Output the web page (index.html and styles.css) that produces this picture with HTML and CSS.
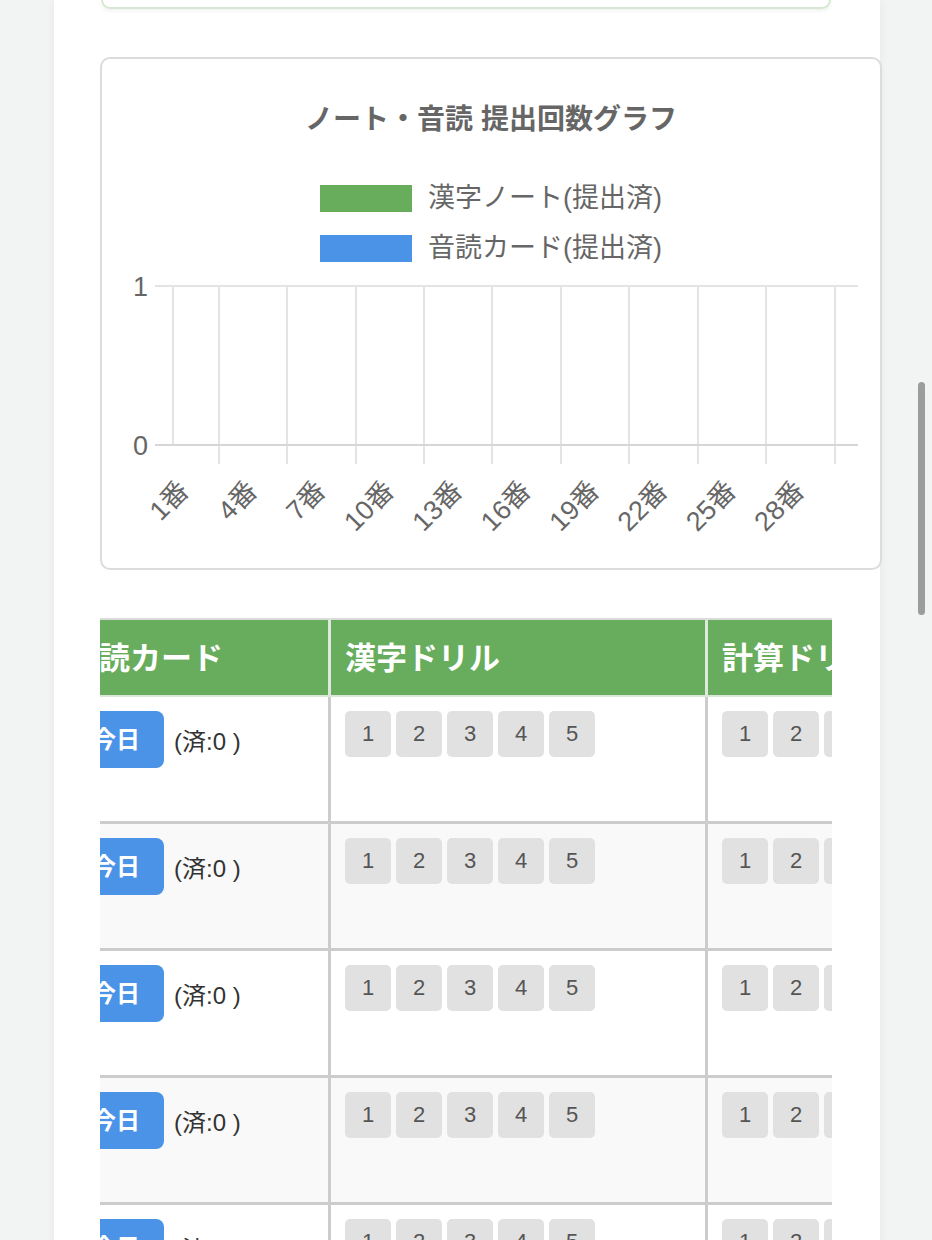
FILE: index.html
```html
<!DOCTYPE html>
<html lang="ja">
<head>
<meta charset="utf-8">
<title>提出状況</title>
<link rel="stylesheet" href="styles.css">
</head>
<body>
<div class="page">
  <div class="top-card"></div>

  <section class="chart-card">
    <h2 class="chart-title">ノート・音読 提出回数グラフ</h2>
    <ul class="legend">
      <li class="legend-item"><span class="swatch swatch-green"></span><span class="legend-label">漢字ノート(提出済)</span></li>
      <li class="legend-item"><span class="swatch swatch-blue"></span><span class="legend-label">音読カード(提出済)</span></li>
    </ul>
    <svg class="plot" width="778" height="303" viewBox="102 265 778 303" xmlns="http://www.w3.org/2000/svg">
      <g stroke="#e4e4e4" stroke-width="2" fill="none">
        <line x1="155" y1="286" x2="858" y2="286"/>
        <line x1="173" y1="286" x2="173" y2="445"/>
        <line x1="219" y1="286" x2="219" y2="464"/>
        <line x1="287" y1="286" x2="287" y2="464"/>
        <line x1="356" y1="286" x2="356" y2="464"/>
        <line x1="424" y1="286" x2="424" y2="464"/>
        <line x1="492" y1="286" x2="492" y2="464"/>
        <line x1="561" y1="286" x2="561" y2="464"/>
        <line x1="629" y1="286" x2="629" y2="464"/>
        <line x1="698" y1="286" x2="698" y2="464"/>
        <line x1="766" y1="286" x2="766" y2="464"/>
        <line x1="835" y1="286" x2="835" y2="464"/>
      </g>
      <line x1="155" y1="445" x2="858" y2="445" stroke="#d6d6d6" stroke-width="2"/>
      <g class="axis-text" text-anchor="end" dominant-baseline="central">
        <text x="148" y="287">1</text>
        <text x="148" y="446">0</text>
      </g>
      <g class="axis-text" text-anchor="end" dominant-baseline="central">
        <text x="184" y="486" transform="rotate(-45 184 486)">1番</text>
        <text x="252.4" y="486" transform="rotate(-45 252.4 486)">4番</text>
        <text x="320.8" y="486" transform="rotate(-45 320.8 486)">7番</text>
        <text x="389.2" y="486" transform="rotate(-45 389.2 486)">10番</text>
        <text x="457.6" y="486" transform="rotate(-45 457.6 486)">13番</text>
        <text x="526" y="486" transform="rotate(-45 526 486)">16番</text>
        <text x="594.4" y="486" transform="rotate(-45 594.4 486)">19番</text>
        <text x="662.8" y="486" transform="rotate(-45 662.8 486)">22番</text>
        <text x="731.2" y="486" transform="rotate(-45 731.2 486)">25番</text>
        <text x="799.6" y="486" transform="rotate(-45 799.6 486)">28番</text>
      </g>
    </svg>
  </section>

  <div class="table-scroll">
    <div class="tbl">
      <div class="th">音読カード</div>
      <div class="th">漢字ドリル</div>
      <div class="th">計算ドリル</div>

      <div class="td"><div class="today-row"><button class="btn-today">今日</button><span class="done">(済:0 )</span></div></div>
      <div class="td"><div class="nums"><span class="num">1</span><span class="num">2</span><span class="num">3</span><span class="num">4</span><span class="num">5</span></div></div>
      <div class="td"><div class="nums"><span class="num">1</span><span class="num">2</span><span class="num">3</span><span class="num">4</span><span class="num">5</span></div></div>

      <div class="td alt"><div class="today-row"><button class="btn-today">今日</button><span class="done">(済:0 )</span></div></div>
      <div class="td alt"><div class="nums"><span class="num">1</span><span class="num">2</span><span class="num">3</span><span class="num">4</span><span class="num">5</span></div></div>
      <div class="td alt"><div class="nums"><span class="num">1</span><span class="num">2</span><span class="num">3</span><span class="num">4</span><span class="num">5</span></div></div>

      <div class="td"><div class="today-row"><button class="btn-today">今日</button><span class="done">(済:0 )</span></div></div>
      <div class="td"><div class="nums"><span class="num">1</span><span class="num">2</span><span class="num">3</span><span class="num">4</span><span class="num">5</span></div></div>
      <div class="td"><div class="nums"><span class="num">1</span><span class="num">2</span><span class="num">3</span><span class="num">4</span><span class="num">5</span></div></div>

      <div class="td alt"><div class="today-row"><button class="btn-today">今日</button><span class="done">(済:0 )</span></div></div>
      <div class="td alt"><div class="nums"><span class="num">1</span><span class="num">2</span><span class="num">3</span><span class="num">4</span><span class="num">5</span></div></div>
      <div class="td alt"><div class="nums"><span class="num">1</span><span class="num">2</span><span class="num">3</span><span class="num">4</span><span class="num">5</span></div></div>

      <div class="td"><div class="today-row"><button class="btn-today">今日</button><span class="done">(済:0 )</span></div></div>
      <div class="td"><div class="nums"><span class="num">1</span><span class="num">2</span><span class="num">3</span><span class="num">4</span><span class="num">5</span></div></div>
      <div class="td"><div class="nums"><span class="num">1</span><span class="num">2</span><span class="num">3</span><span class="num">4</span><span class="num">5</span></div></div>
    </div>
  </div>
</div>
<div class="scroll-thumb"></div>
</body>
</html>
```

FILE: styles.css
```css
html, body {
  margin: 0;
  padding: 0;
  height: 1240px;
  overflow: hidden;
}
body {
  background: #f2f4f3;
  font-family: "Liberation Sans", "Noto Sans CJK JP", sans-serif;
  color: #333;
}
.page {
  margin-left: 54px;
  width: 826px;
  min-height: 1240px;
  background: #fff;
  box-shadow: 0 0 10px rgba(0, 0, 0, 0.05);
  padding-left: 46px;
  box-sizing: border-box;
}
.top-card {
  margin-left: 1px;
  width: 730px;
  height: 9px;
  box-sizing: border-box;
  border: 2px solid #d6e7d2;
  border-top: 0;
  border-radius: 0 0 10px 10px;
  box-shadow: 0 2px 4px rgba(0, 0, 0, 0.06);
}
.chart-card {
  margin-top: 48px;
  width: 782px;
  box-sizing: border-box;
  border: 2px solid #dcdcdc;
  border-radius: 10px;
  background: #fff;
  padding-top: 45px;
}
.chart-title {
  margin: 0;
  font-size: 28px;
  line-height: 32px;
  font-weight: bold;
  color: #666;
  text-align: center;
}
.legend {
  list-style: none;
  margin: 49px 0 0;
  padding: 0;
  display: flex;
  flex-direction: column;
  align-items: center;
  gap: 23px;
}
.legend-item {
  display: flex;
  align-items: center;
  gap: 16px;
  height: 27px;
}
.swatch {
  width: 92px;
  height: 27px;
  display: block;
}
.swatch-green { background: #67ad5c; }
.swatch-blue { background: #4a93e7; }
.legend-label {
  font-size: 27px;
  line-height: 27px;
  color: #666;
  white-space: nowrap;
}
.plot {
  display: block;
  margin-top: 3px;
}
.axis-text {
  font-family: "Liberation Sans", "Noto Sans CJK JP", sans-serif;
  font-size: 27px;
  fill: #666;
}
.table-scroll {
  margin-top: 48px;
  width: 732px;
  overflow: hidden;
}
.tbl {
  margin-left: -46px;
  display: grid;
  grid-template-columns: 277px 377px 377px;
  width: 1031px;
}
.th {
  height: 79px;
  box-sizing: border-box;
  background: #68ad5d;
  border-top: 2px solid #dadada;
  border-bottom: 2px solid #dde6db;
  border-right: 3px solid #dde9da;
  padding: 0 14px 4px;
  display: flex;
  align-items: center;
  color: #fff;
  font-size: 31px;
  font-weight: bold;
  white-space: nowrap;
}
.td {
  height: 127px;
  box-sizing: border-box;
  border-right: 3px solid #cccccc;
  border-bottom: 3px solid #cccccc;
  padding: 14px 14px 0;
  background: #fff;
}
.td.alt { background: #f9f9f9; }
.today-row {
  display: flex;
  align-items: center;
  gap: 10px;
}
.btn-today {
  height: 57px;
  padding: 0 24px;
  border: 0;
  border-radius: 8px;
  background: #4a93e7;
  color: #fff;
  font-family: "Liberation Sans", "Noto Sans CJK JP", sans-serif;
  font-size: 24px;
  font-weight: bold;
  line-height: 57px;
}
.done {
  font-size: 24px;
  color: #333;
  white-space: nowrap;
}
.nums {
  display: flex;
  gap: 5px;
}
.num {
  width: 46px;
  height: 46px;
  flex: none;
  border-radius: 5px;
  background: #e1e1e1;
  color: #555;
  font-size: 22px;
  display: flex;
  align-items: center;
  justify-content: center;
}
.scroll-thumb {
  position: fixed;
  left: 918px;
  top: 382px;
  width: 7px;
  height: 233px;
  border-radius: 4px;
  background: #9c9c9c;
}
```
